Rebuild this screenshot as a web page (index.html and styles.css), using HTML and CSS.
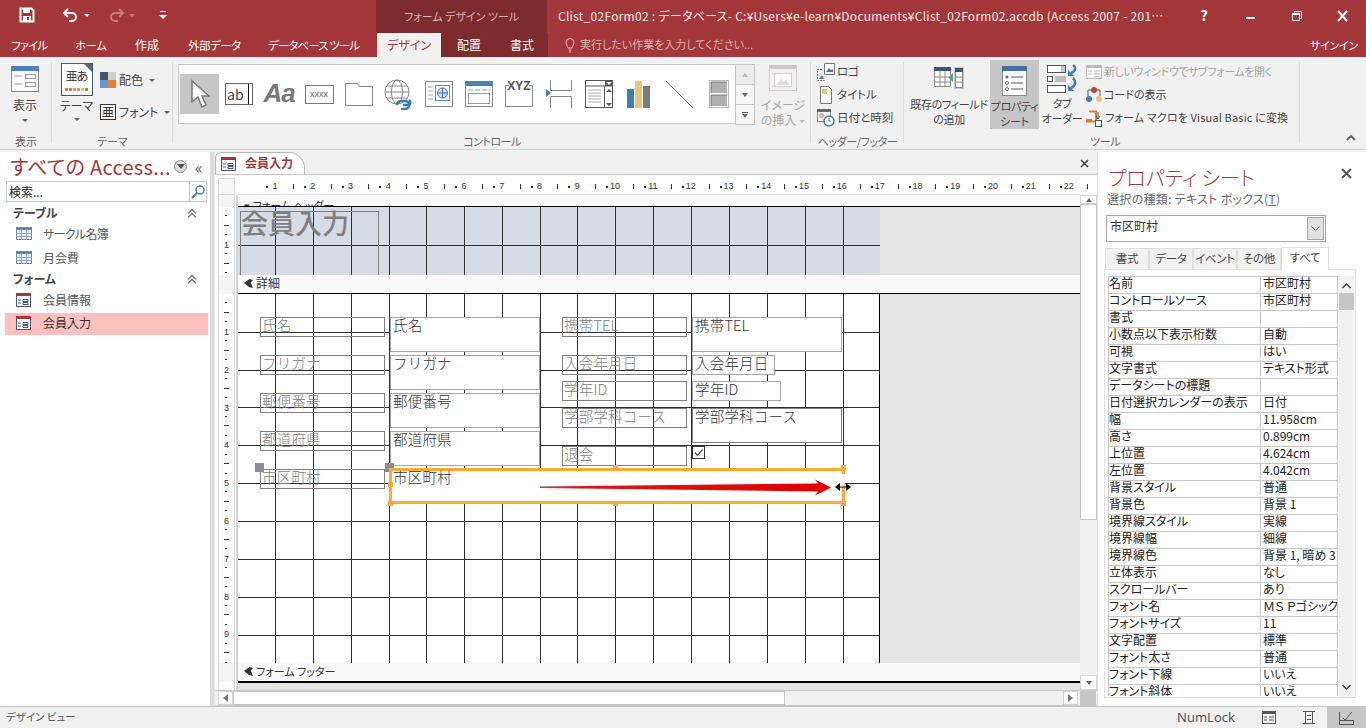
FILE: index.html
```html
<!DOCTYPE html>
<html lang="ja">
<head>
    <meta charset="UTF-8">
    <title>Clist_02Form02</title>
    <link rel="stylesheet" href="styles.css">
</head>
<body>
<div class="titlebar">
    <div class="qat">
        <svg class="qat-save" width="16" height="16" viewBox="0 0 16 16"><path d="M1.500 1.500h11l2 2v11h-13z" fill="none" stroke="#fff" stroke-width="2"/><rect x="4" y="2" width="7" height="4" fill="#fff"/><rect x="4" y="9" width="8" height="5" fill="#fff"/><rect x="8" y="10" width="2" height="3" fill="#a4373a"/></svg>
        <svg class="qat-undo" width="18" height="14" viewBox="0 0 18 14"><path d="M6 1L2 5l4 4M2 5h8a4 4 0 0 1 0 8H7" fill="none" stroke="#fff" stroke-width="2"/></svg>
        <span class="caret caret-w"></span>
        <svg class="qat-redo" width="18" height="14" viewBox="0 0 18 14"><path d="M12 1l4 4-4 4M16 5H8a4 4 0 0 0 0 8h3" fill="none" stroke="#c57c7e" stroke-width="2"/></svg>
        <span class="caret caret-dim"></span>
        <svg class="qat-more" width="8" height="9" viewBox="0 0 8 9"><rect x="1" y="0" width="6" height="1" fill="#fff"/><path d="M0 4h8L4 8z" fill="#fff"/></svg>
    </div>
    <div class="ctx-title">フォーム デザイン ツール</div>
    <div class="doc-title">Clist_02Form02 : データベース- C:¥Users¥e-learn¥Documents¥Clist_02Form02.accdb (Access 2007 - 201…</div>
    <div class="winbtns">
        <span class="help">?</span>
        <svg width="46" height="14" viewBox="0 0 46 14"><rect x="18" y="8" width="9" height="2" fill="#fff"/></svg>
        <svg width="46" height="14" viewBox="0 0 46 14"><path d="M18.500 4.500h7v7h-7zM20.500 4.500v-2h7v7h-2" fill="none" stroke="#fff"/><rect x="18" y="4" width="8" height="2" fill="#fff"/></svg>
        <svg width="46" height="14" viewBox="0 0 46 14"><path d="M18 2l9 10M27 2l-9 10" stroke="#fff" stroke-width="2"/></svg>
    </div>
</div>

<div class="tabbar">
    <span class="tab tab-file">ファイル</span>
    <span class="tab tab-home">ホーム</span>
    <span class="tab tab-create">作成</span>
    <span class="tab tab-ext">外部データ</span>
    <span class="tab tab-db">データベース ツール</span>
    <div class="ctx-tabs">
        <span class="tab-active">デザイン</span>
        <span class="tab tab-arr">配置</span>
        <span class="tab tab-fmt">書式</span>
    </div>
    <div class="tell">
        <svg width="10" height="15" viewBox="0 0 10 15"><path d="M3 10c0-2-2-3-2-5.500a4 4 0 0 1 8 0C9 7 7 8 7 10zM3.500 12h3M4 14h2" fill="none" stroke="#e0c4c5"/></svg>
        <span>実行したい作業を入力してください...</span>
    </div>
    <span class="signin">サインイン</span>
</div>

<div class="ribbon">
    <section class="group g-view">
        <div class="group-body">
            <div class="bigbtn btn-view">
                <svg width="28" height="26" viewBox="0 0 28 26"><rect x=".5" y=".5" width="27" height="25" fill="#fff" stroke="#8a8a8a"/><rect width="28" height="5" fill="#4d82b8"/><path d="M3 10h8M3 18h8" stroke="#999"/><rect x="14.500" y="8.500" width="10" height="4" fill="none" stroke="#999"/><rect x="14.500" y="16.500" width="10" height="4" fill="none" stroke="#999"/></svg>
                <span>表示</span>
                <i class="caret"></i>
            </div>
        </div>
        <div class="group-label">表示</div>
    </section>
    <section class="group g-theme">
        <div class="group-body theme-body">
            <div class="bigbtn btn-theme">
                <div class="theme-icon">
                    <span class="theme-glyph">亜あ</span>
                    <svg width="24" height="4" viewBox="0 0 24 4"><rect x="0" width="3" height="3" fill="#e07b2c"/><rect x="4" width="3" height="3" fill="#e07b2c"/><rect x="8" width="3" height="3" fill="#c9a35f"/><rect x="12" width="3" height="3" fill="#a5a5a5"/><rect x="16" width="3" height="3" fill="#f0c040"/><rect x="20" width="3" height="3" fill="#6aa84f"/></svg>
                </div>
                <span class="theme-label">テーマ</span>
                <i class="caret"></i>
            </div>
            <div class="theme-side">
                <div class="side-row">
                    <svg width="16" height="16" viewBox="0 0 16 16"><rect width="8" height="8" fill="#44546a"/><rect x="8" width="8" height="8" fill="#d0cece"/><rect y="8" width="8" height="8" fill="#5b9bd5"/><rect x="8" y="8" width="8" height="8" fill="#ed7d31"/></svg>
                    <span>配色</span><i class="caret"></i>
                </div>
                <div class="side-row side-font">
                    <span class="font-icon">亜</span>
                    <span>フォント</span><i class="caret"></i>
                </div>
            </div>
        </div>
        <div class="group-label">テーマ</div>
    </section>
    <section class="group g-ctl">
        <div class="group-body ctl-body">
            <div class="gallery">
                <div class="cell cell-on"><svg width="20" height="30" viewBox="0 0 20 30"><path d="M2 2v21l6-5 4 10 4-2-4-9h7z" fill="#fff" stroke="#777" stroke-width="1.500"/></svg></div>
                <div class="cell"><div class="ic-text">ab</div></div>
                <div class="cell"><span class="ic-aa">Aa</span></div>
                <div class="cell"><div class="ic-xxxx">xxxx</div></div>
                <div class="cell"><svg width="28" height="24" viewBox="0 0 28 24"><path d="M.5 23.500V1.500h12l2 3h13v19z" fill="#fff" stroke="#888"/></svg></div>
                <div class="cell"><svg width="32" height="32" viewBox="0 0 32 32"><g fill="none" stroke="#888"><circle cx="14" cy="14" r="12"/><ellipse cx="14" cy="14" rx="5.500" ry="12"/><path d="M2 14h24M4 8h20M4 20h20"/></g><path d="M14 27a4 4 0 0 1 4-4h4a4 4 0 0 1 0 8h-4" fill="none" stroke="#3b7bb5" stroke-width="2.500"/><path d="M20 27h6a3 3 0 0 0 0-5" fill="none" stroke="#3b7bb5" stroke-width="2.500"/></svg></div>
                <div class="cell"><svg width="28" height="26" viewBox="0 0 28 26"><rect x=".5" y=".5" width="27" height="25" fill="#fff" stroke="#888"/><path d="M3 6h5M3 10h5M3 14h5M3 18h5" stroke="#aaa"/><rect x="10.500" y="4.500" width="14" height="15" fill="none" stroke="#5b8fc2"/><circle cx="17.500" cy="12" r="5" fill="#cfe0f0" stroke="#3f7cb5"/><path d="M12.500 12h10M17.500 7v10" stroke="#3f7cb5"/></svg></div>
                <div class="cell"><svg width="28" height="26" viewBox="0 0 28 26"><rect x=".5" y=".5" width="27" height="25" fill="#fff" stroke="#888"/><rect width="28" height="5" fill="#4d82b8"/><path d="M3 9h22" stroke="#999" stroke-dasharray="5 2"/><rect x="3.500" y="12.500" width="21" height="10" fill="none" stroke="#999"/></svg></div>
                <div class="cell cell-xyz"><svg width="28" height="26" viewBox="0 0 28 26"><path d="M4 4.500H.5v21h27v-21H24" fill="#fff" stroke="#888"/></svg><span class="ic-xyz">XYZ</span></div>
                <div class="cell"><svg width="26" height="28" viewBox="0 0 26 28"><path d="M4.500 0v10.500h21V0M4.500 28V16.500h21V28" fill="none" stroke="#888"/><path d="M0 9l5 4-5 4z" fill="#3f7cb5"/></svg></div>
                <div class="cell"><svg width="28" height="28" viewBox="0 0 28 28"><rect x=".5" y=".5" width="27" height="27" fill="#fff" stroke="#555"/><path d="M0 6h28" stroke="#555"/><rect x="20" y="0" width="8" height="6" fill="#555"/><path d="M21 2h6l-3 3z" fill="#fff"/><path d="M19.500 6v22" stroke="#555"/><path d="M21 12h6l-3-3zM21 23h6l-3 3z" fill="#555"/><path d="M3 10h13M3 13h13M3 16h13M3 19h13M3 22h13" stroke="#aaa"/></svg></div>
                <div class="cell"><svg width="24" height="28" viewBox="0 0 24 28"><rect y="9" width="7" height="19" fill="#3f7cb5"/><rect x="8" y="1" width="7" height="27" fill="#e9c47c"/><rect x="16" y="6" width="7" height="22" fill="#7a7a7a"/></svg></div>
                <div class="cell"><svg width="29" height="29" viewBox="0 0 29 29"><path d="M1 1l27 27" stroke="#666"/></svg></div>
                <div class="cell"><svg width="20" height="28" viewBox="0 0 20 28"><rect x=".5" y=".5" width="19" height="27" fill="#fff" stroke="#bbb"/><rect x="2" y="2" width="16" height="11" fill="#b0b0b0"/><path d="M2 13V2h16" fill="none" stroke="#777"/><rect x="2" y="15" width="16" height="11" fill="#b0b0b0"/><path d="M2 26V15h16" fill="none" stroke="#777"/></svg></div>
                <div class="gal-scroll">
                    <span class="gal-btn gal-up"><i class="tri-up"></i></span>
                    <span class="gal-btn"><i class="tri-dn"></i></span>
                    <span class="gal-btn gal-more"><b></b><i class="tri-dn"></i></span>
                </div>
            </div>
            <div class="bigbtn btn-image">
                <svg width="28" height="26" viewBox="0 0 28 26"><rect x=".5" y=".5" width="27" height="25" fill="#f3eff3" stroke="#cfcfcf"/><rect width="28" height="4" fill="#c9c9c9"/><rect x="5.500" y="8.500" width="17" height="13" fill="#fff" stroke="#d8d0d8"/><path d="M7 20l5-6 3 3 2-2 4 5z" fill="#ddd"/></svg>
                <span>イメージ<br>の挿入<i class="caret caret-inl"></i></span>
            </div>
        </div>
        <div class="group-label label-ctl">コントロール</div>
    </section>
    <section class="group g-head">
        <div class="group-body head-body">
            <div class="list-row"><svg width="18" height="18" viewBox="0 0 18 18"><path d="M7.500 .5h10v11h-10z" fill="#fff" stroke="#777"/><path d="M9 9l3-4 2 2 2-1v3z" fill="#3f7cb5"/><path d="M5 6.500H.5v11h7" fill="none" stroke="#777" stroke-dasharray="2 1"/><path d="M2 16l3-4 2 4z" fill="#3f7cb5"/></svg><span>ロゴ</span></div>
            <div class="list-row"><svg width="18" height="18" viewBox="0 0 18 18"><path d="M3.500 .5h8l3 3v14h-11z" fill="#fff" stroke="#777"/><rect x="5" y="3" width="5" height="5" fill="#e9c47c"/></svg><span>タイトル</span></div>
            <div class="list-row"><svg width="18" height="18" viewBox="0 0 18 18"><rect x=".5" y=".5" width="13" height="12" fill="#fff" stroke="#888"/><rect width="14" height="3" fill="#666"/><rect x="3" y="5" width="3" height="3" fill="none" stroke="#e07b2c"/><circle cx="12" cy="12" r="5" fill="#fff" stroke="#3f7cb5" stroke-width="1.500"/><path d="M12 9v3h2" fill="none" stroke="#3f7cb5"/></svg><span>日付と時刻</span></div>
        </div>
        <div class="group-label label-head">ヘッダー/フッター</div>
    </section>
    <section class="group g-tools">
        <div class="group-body tools-body">
            <div class="bigbtn btn-add">
                <svg width="30" height="23" viewBox="0 0 30 23"><rect x="20" y="0" width="10" height="22" fill="#b7cfe3"/><path d="M.5 1.500h16v18H.5z" fill="#fff" stroke="#888"/><rect width="17" height="4" fill="#44546a"/><path d="M.5 10h16M.5 15h16M6 4v16M11 4v16" stroke="#888"/><rect x="21.500" y="1.500" width="7" height="19" fill="#fff" stroke="#888"/><rect x="21" y="1" width="8" height="4" fill="#44546a"/><path d="M21.500 10h7M21.500 15h7" stroke="#888"/><path d="M19 6v9l-5-4.500z" fill="#5ea38f"/></svg>
                <span>既存のフィールド<br>の追加</span>
            </div>
            <div class="bigbtn btn-prop">
                <svg width="25" height="30" viewBox="0 0 25 30"><rect x=".5" y=".5" width="24" height="29" fill="#fff" stroke="#888"/><rect width="25" height="5" fill="#3f6fa5"/><circle cx="5" cy="11" r="1.500" fill="#666"/><circle cx="5" cy="17" r="1.500" fill="none" stroke="#666"/><circle cx="5" cy="23" r="1.500" fill="none" stroke="#666"/><path d="M9 11h12M9 17h12M9 23h12" stroke="#555"/></svg>
                <span>プロパティ<br>シート</span>
            </div>
            <div class="bigbtn btn-order">
                <svg width="31" height="29" viewBox="0 0 31 29"><rect x=".5" y="1.500" width="18" height="7" fill="#fff" stroke="#555"/><rect x="14" y="2" width="4" height="6" fill="#b7cfe3"/><rect x=".5" y="12.500" width="5" height="5" fill="#fff" stroke="#555"/><path d="M8 13h11M8 15h11M8 17h11" stroke="#888"/><rect x=".5" y="21.500" width="18" height="7" fill="#fff" stroke="#555"/><path d="M26 1c3 2 3 6-2 8M26 14c3 3 3 8-2 10" fill="none" stroke="#3f7cb5" stroke-width="2.500"/><path d="M21 6v6h6zM21 21v6h6z" fill="#3f7cb5"/></svg>
                <span>タブ<br>オーダー</span>
            </div>
            <div class="tool-list">
                <div class="list-row row-dim"><svg width="16" height="14" viewBox="0 0 16 14"><rect x=".5" y=".5" width="15" height="13" fill="#fff" stroke="#bbb"/><rect width="16" height="3" fill="#bbb"/><path d="M2 6h4M2 9h4M8 6h6M8 9h6M8 12h6" stroke="#bbb"/></svg><span>新しいウィンドウでサブフォームを開く</span></div>
                <div class="list-row"><svg width="16" height="16" viewBox="0 0 16 16"><path d="M2 9V3h12v6" fill="none" stroke="#555"/><circle cx="8" cy="3" r="3" fill="#c0413b"/><circle cx="3" cy="12" r="3" fill="#3f7cb5"/><circle cx="13" cy="12" r="3" fill="#e9c47c"/></svg><span>コードの表示</span></div>
                <div class="list-row row-macro"><svg width="17" height="17" viewBox="0 0 17 17"><path d="M3 1.500h7v10H0" fill="#fff" stroke="#e07b2c" stroke-width="2"/><rect x="0" y="9" width="6" height="3" fill="#e07b2c"/><path d="M12 2v7M10 6l2 3 2-3" fill="none" stroke="#555"/><rect x="9.500" y="10.500" width="6" height="6" fill="#fff" stroke="#3a5a80"/></svg><span>フォーム マクロを Visual Basic に変換</span></div>
            </div>
        </div>
        <div class="group-label label-tools">ツール</div>
    </section>
    <div class="collapse"><svg width="10" height="7" viewBox="0 0 10 7"><path d="M1 6l4-4 4 4" fill="none" stroke="#666" stroke-width="2"/></svg></div>
</div>

<div class="main">
    <aside class="nav">
        <div class="nav-head">
            <span class="nav-title">すべての Access...</span>
            <span class="nav-drop"><svg width="8" height="5" viewBox="0 0 8 5"><path d="M0 0h8L4 5z" fill="#555"/></svg></span>
            <span class="nav-hide">«</span>
        </div>
        <div class="nav-search">
            <span>検索...</span>
            <span class="search-btn"><svg width="14" height="14" viewBox="0 0 14 14"><circle cx="9" cy="5" r="4" fill="none" stroke="#3f7cb5" stroke-width="1.500"/><path d="M6 8l-5 5" stroke="#3f7cb5" stroke-width="2"/></svg></span>
        </div>
        <div class="nav-sec"><span>テーブル</span><i class="dbl"></i></div>
        <div class="nav-item item-kana"><svg class="ic-table" width="16" height="13" viewBox="0 0 16 13"><rect x=".5" y=".5" width="15" height="12" fill="#eaf0f7" stroke="#6d86a5"/><rect width="16" height="3" fill="#6d86a5"/><path d="M0 6.500h16M0 9.500h16M5.500 3v10M10.500 3v10" stroke="#8ea3bc"/></svg><span>サークル名簿</span></div>
        <div class="nav-item"><svg class="ic-table" width="16" height="13" viewBox="0 0 16 13"><rect x=".5" y=".5" width="15" height="12" fill="#eaf0f7" stroke="#6d86a5"/><rect width="16" height="3" fill="#6d86a5"/><path d="M0 6.500h16M0 9.500h16M5.500 3v10M10.500 3v10" stroke="#8ea3bc"/></svg><span>月会費</span></div>
        <div class="nav-sec sec-form"><span>フォーム</span><i class="dbl"></i></div>
        <div class="nav-item item-form"><svg width="15" height="14" viewBox="0 0 15 14"><rect x=".5" y=".5" width="14" height="13" fill="#fff" stroke="#3f5a7a"/><rect width="15" height="3" fill="#a4373a"/><path d="M2 7h3M2 10h3M7 6.500h5v2H7zM7 9.500h5v2H7z" fill="none" stroke="#3f5a7a"/></svg><span>会員情報</span></div>
        <div class="nav-item item-form item-on"><svg width="15" height="14" viewBox="0 0 15 14"><rect x=".5" y=".5" width="14" height="13" fill="#fff" stroke="#3f5a7a"/><rect width="15" height="3" fill="#a4373a"/><path d="M2 7h3M2 10h3M7 6.500h5v2H7zM7 9.500h5v2H7z" fill="none" stroke="#3f5a7a"/></svg><span>会員入力</span></div>
    </aside>

    <div class="doc">
        <div class="doc-tabs">
            <div class="doc-tab">
                <svg width="15" height="14" viewBox="0 0 15 14"><rect x=".5" y=".5" width="14" height="13" fill="#fff" stroke="#3f5a7a"/><rect width="15" height="3" fill="#a4373a"/><path d="M2 7h3M2 10h3M7 6.500h5v2H7zM7 9.500h5v2H7z" fill="none" stroke="#3f5a7a"/></svg>
                <span>会員入力</span>
            </div>
            <svg class="doc-close" width="9" height="9" viewBox="0 0 9 9"><path d="M1 1l7 7M8 1L1 8" stroke="#444" stroke-width="1.500"/></svg>
        </div>
        <div class="doc-body">
            <div class="doc-work">
                <div class="ruler-row">
                    <div class="ruler-corner"></div>
                    <div class="hruler">
                        <span>1</span><span>2</span><span>3</span><span>4</span><span>5</span><span>6</span><span>7</span><span>8</span><span>9</span><span>10</span><span>11</span><span>12</span><span>13</span><span>14</span><span>15</span><span>16</span><span>17</span><span>18</span><span>19</span><span>20</span><span>21</span><span>22</span>
                    </div>
                </div>
                <div class="design-row">
                    <div class="vruler">
                        <div class="vband"></div>
                        <div class="vsec vsec-head"><span>1</span></div>
                        <div class="vband vband-mid"></div>
                        <div class="vsec vsec-detail">
                            <span>1</span><span>2</span><span>3</span><span>4</span><span>5</span><span>6</span><span>7</span><span>8</span><span>9</span>
                        </div>
                        <div class="vband vband-foot"></div>
                    </div>
                    <div class="design">
                        <div class="band band-top"><span class="band-clip">▾ フォーム ヘッダー</span></div>
                        <div class="sec-head">
                            <svg class="grid" width="642" height="68" viewBox="0 0 642 68"><path d="M37.500 0v68M75.500 0v68M113.500 0v68M151.500 0v68M188.500 0v68M226.500 0v68M264.500 0v68M302.500 0v68M339.500 0v68M377.500 0v68M415.500 0v68M453.500 0v68M491.500 0v68M529.500 0v68M567.500 0v68M605.500 0v68M642 0v68M0 38.500h642" stroke="#2f2f2f" fill="none"/></svg>
                            <div class="title-box">会員入力</div>
                        </div>
                        <div class="band band-detail"><i class="band-mark"></i><span>詳細</span></div>
                        <div class="sec-detail">
                            <svg class="grid" width="642" height="369" viewBox="0 0 642 369"><path d="M37.500 0v369M75.500 0v369M113.500 0v369M151.500 0v369M188.500 0v369M226.500 0v369M264.500 0v369M302.500 0v369M339.500 0v369M377.500 0v369M415.500 0v369M453.500 0v369M491.500 0v369M529.500 0v369M567.500 0v369M605.500 0v369M0 38.500h642M0 76.500h642M0 113.500h642M0 151.500h642M0 189.500h642M0 227.500h642M0 265.500h642M0 303.500h642M0 341.500h642" stroke="#2f2f2f" fill="none"/><path d="M642 0v369" stroke="#000" stroke-width="2"/></svg>

                            <div class="lbl" style="left:22px;top:23px">氏名</div>
                            <div class="lbl" style="left:22px;top:61px">フリガナ</div>
                            <div class="lbl" style="left:22px;top:99px">郵便番号</div>
                            <div class="lbl" style="left:22px;top:137px">都道府県</div>
                            <div class="lbl" style="left:22px;top:175px">市区町村</div>

                            <div class="box box-tall" style="left:152px;top:23px">氏名</div>
                            <div class="box box-tall" style="left:152px;top:61px">フリガナ</div>
                            <div class="box box-tall" style="left:152px;top:99px">郵便番号</div>
                            <div class="box box-tall" style="left:152px;top:137px">都道府県</div>

                            <div class="lbl" style="left:324px;top:23px">携帯TEL</div>
                            <div class="lbl" style="left:324px;top:61px">入会年月日</div>
                            <div class="lbl" style="left:324px;top:87px">学年ID</div>
                            <div class="lbl" style="left:324px;top:114px">学部学科コース</div>
                            <div class="lbl" style="left:324px;top:152px">退会</div>

                            <div class="box box-tall" style="left:454px;top:23px">携帯TEL</div>
                            <div class="box box-date" style="left:454px;top:61px">入会年月日</div>
                            <div class="box box-grade" style="left:454px;top:87px">学年ID</div>
                            <div class="box box-tall box-dark" style="left:454px;top:114px">学部学科コース</div>
                            <svg class="check" width="14" height="14" viewBox="0 0 14 14"><rect x=".5" y=".5" width="12" height="12" fill="#fff" stroke="#333"/><path d="M3 6.500l2.500 3 5-6" fill="none" stroke="#555" stroke-width="1.200"/></svg>

                            <div class="handle-g" style="left:17px;top:169px"></div>
                            <div class="handle-g" style="left:147px;top:169px"></div>
                            <div class="selected">市区町村</div>
                            <i class="handle-o" style="left:150px;top:188px"></i>
                            <i class="handle-o" style="left:375px;top:171px"></i>
                            <i class="handle-o" style="left:603px;top:171px"></i>
                            <i class="handle-o" style="left:150px;top:207px"></i>
                            <i class="handle-o" style="left:375px;top:207px"></i>
                            <i class="handle-o" style="left:603px;top:207px"></i>
                            <i class="sel-gap"></i>

                            <svg class="arrow" width="330" height="20" viewBox="0 0 330 20"><defs><linearGradient id="ag" x1="0" x2="1" y1="0" y2="0"><stop offset="0" stop-color="#b0483f"/><stop offset=".12" stop-color="#d81a1a"/><stop offset="1" stop-color="#e20000"/></linearGradient></defs><path d="M0 8.500L278 5.500l-3-4 16 8-16 8 3-4L0 10z" fill="url(#ag)"/><path d="M299 9h8" stroke="#000"/><path d="M295 9l5-4v8zM311 9l-5-4v8z" fill="#000"/></svg>
                        </div>
                        <div class="band band-foot"><i class="band-mark"></i><span>フォーム フッター</span></div>
                        <div class="foot-rest"></div>
                    </div>
                    <div class="vscroll">
                        <span class="sb-btn"><i class="tri-up"></i></span>
                        <span class="sb-thumb"></span>
                        <span class="sb-track"></span>
                        <span class="sb-btn"><i class="tri-dn"></i></span>
                    </div>
                </div>
            </div>
            <div class="hscroll-row">
                <div class="hscroll">
                    <span class="hs-btn"><i class="tri-l"></i></span>
                    <span class="hs-thumb"></span>
                    <span class="hs-track"></span>
                    <span class="hs-btn"><i class="tri-r"></i></span>
                </div>
                <span class="hs-corner"></span>
            </div>
        </div>
    </div>

    <aside class="props">
        <div class="props-head">
            <span class="props-title">プロパティ シート</span>
            <svg width="11" height="11" viewBox="0 0 11 11"><path d="M1 1l9 9M10 1l-9 9" stroke="#555" stroke-width="2"/></svg>
        </div>
        <div class="props-sub">選択の種類: テキスト ボックス(<u>T</u>)</div>
        <div class="props-combo">
            <span>市区町村</span>
            <span class="combo-btn"><svg width="9" height="5" viewBox="0 0 9 5"><path d="M.5.500l4 4 4-4" fill="none" stroke="#555"/></svg></span>
        </div>
        <div class="props-tabs">
            <span>書式</span><span>データ</span><span>イベント</span><span>その他</span><span class="ptab-on">すべて</span>
        </div>
        <div class="props-body">
            <div class="prop-table">
                <div class="prow"><span>名前</span><span>市区町村</span></div>
                <div class="prow"><span>コントロールソース</span><span>市区町村</span></div>
                <div class="prow"><span>書式</span><span></span></div>
                <div class="prow"><span>小数点以下表示桁数</span><span>自動</span></div>
                <div class="prow"><span>可視</span><span>はい</span></div>
                <div class="prow"><span>文字書式</span><span>テキスト形式</span></div>
                <div class="prow"><span>データシートの標題</span><span></span></div>
                <div class="prow"><span>日付選択カレンダーの表示</span><span>日付</span></div>
                <div class="prow"><span>幅</span><span>11.958cm</span></div>
                <div class="prow"><span>高さ</span><span>0.899cm</span></div>
                <div class="prow"><span>上位置</span><span>4.624cm</span></div>
                <div class="prow"><span>左位置</span><span>4.042cm</span></div>
                <div class="prow"><span>背景スタイル</span><span>普通</span></div>
                <div class="prow"><span>背景色</span><span>背景 1</span></div>
                <div class="prow"><span>境界線スタイル</span><span>実線</span></div>
                <div class="prow"><span>境界線幅</span><span>細線</span></div>
                <div class="prow"><span>境界線色</span><span>背景 1, 暗め 3</span></div>
                <div class="prow"><span>立体表示</span><span>なし</span></div>
                <div class="prow"><span>スクロールバー</span><span>あり</span></div>
                <div class="prow"><span>フォント名</span><span>ＭＳ Ｐゴシック</span></div>
                <div class="prow"><span>フォントサイズ</span><span>11</span></div>
                <div class="prow"><span>文字配置</span><span>標準</span></div>
                <div class="prow"><span>フォント太さ</span><span>普通</span></div>
                <div class="prow"><span>フォント下線</span><span>いいえ</span></div>
                <div class="prow"><span>フォント斜体</span><span>いいえ</span></div>
            </div>
            <div class="prop-scroll">
                <svg width="9" height="6" viewBox="0 0 9 6"><path d="M.5 5l4-4 4 4" fill="none" stroke="#444" stroke-width="1.500"/></svg>
                <span class="ps-thumb"></span>
                <span class="ps-track"></span>
                <svg width="9" height="6" viewBox="0 0 9 6"><path d="M.5 1l4 4 4-4" fill="none" stroke="#444" stroke-width="1.500"/></svg>
            </div>
        </div>
    </aside>
</div>

<div class="status">
    <span class="st-text">デザイン ビュー</span>
    <span class="st-num">NumLock</span>
    <span class="st-btn"><svg width="14" height="13" viewBox="0 0 14 13"><rect x=".5" y=".5" width="13" height="12" fill="none" stroke="#555"/><rect width="14" height="3" fill="#555"/><path d="M2 6h3M2 9h3M7 6h5M7 9h5" stroke="#555"/></svg></span>
    <span class="st-btn st-btn2"><svg width="12" height="13" viewBox="0 0 12 13"><path d="M0 .5h12M0 12.500h12M2.500 1v11M9.500 1v11M4 4.500h4M4 8.500h4" stroke="#555" fill="none"/></svg></span>
    <span class="st-btn st-on"><svg width="15" height="14" viewBox="0 0 15 14"><path d="M.5 1v12.500h14V9M.5 9.500h14" fill="none" stroke="#555"/><path d="M4 7l2 2 7-8" fill="none" stroke="#555"/></svg></span>
</div>
</body>
</html>
```

FILE: styles.css
```css
* {
    margin: 0;
    padding: 0;
    box-sizing: border-box;
}
html, body {
    width: 1366px;
    height: 728px;
    overflow: hidden;
}
body {
    background-color: #f1f1f1;
    color: #444;
    font-family: "Noto Sans CJK JP", "Noto Sans", sans-serif;
    font-size: 12px;
    font-feature-settings: "palt";
    line-height: 1.2;
}
i {
    display: block;
}

/* title bar */
.titlebar {
    height: 33px;
    background-color: #a4373a;
    display: flex;
    color: #fff;
}
.qat {
    width: 377px;
    display: flex;
    align-items: center;
    padding-left: 19px;
    padding-bottom: 3px;
}
.qat-undo { margin-left: 27px; }
.caret-w { margin-left: 4px; border-top-color: #fff !important; }
.qat-redo { margin-left: 17px; }
.caret-dim { margin-left: 4px; border-top-color: #c57c7e !important; }
.qat-more { margin-left: 24px; }
.caret {
    display: inline-block;
    width: 0;
    height: 0;
    border-left: 3px solid transparent;
    border-right: 3px solid transparent;
    border-top: 3px solid #666;
}
.ctx-title {
    width: 171px;
    background-color: #7e2b2d;
    color: #d3b3b4;
    text-align: center;
    padding-top: 10px;
    font-size: 11px;
}
.doc-title {
    width: 643px;
    padding-left: 11px;
    padding-top: 9px;
    white-space: nowrap;
    font-size: 12px;
    letter-spacing: .27px;
    color: #f6e9e9;
    flex: none;
}
.winbtns {
    flex: none;
    display: flex;
    align-items: center;
    padding-bottom: 2px;
}
.winbtns svg { flex: none; }
.help {
    width: 28px;
    margin-right: 10px;
    font-weight: 700;
    font-size: 14px;
    text-align: center;
}

/* tabs */
.tabbar {
    height: 24px;
    background-color: #a4373a;
    display: flex;
    color: #fff;
    position: relative;
}
.tab {
    line-height: 24px;
    white-space: nowrap;
}
.tab-file { margin-left: 11px; width: 64px; font-size: 11.500px; letter-spacing: -.9px; }
.tab-home { width: 60px; font-size: 11.500px; letter-spacing: -.5px; }
.tab-create { width: 53px; }
.tab-ext { width: 80px; font-size: 11.500px; letter-spacing: -.5px; }
.tab-db { width: 109px; font-size: 11.500px; letter-spacing: -.9px; }
.ctx-tabs {
    width: 171px;
    background-color: #7e2b2d;
    display: flex;
}
.tab-active {
    width: 64px;
    background-color: #f1f1f1;
    color: #a4373a;
    line-height: 24px;
    text-align: center;
}
.tab-arr { margin-left: 16px; width: 53px; }
.tell {
    width: 762px;
    display: flex;
    align-items: center;
    gap: 5px;
    padding-left: 17px;
    color: #d7b5b6;
    font-size: 11px;
}
.signin {
    line-height: 24px;
    font-size: 11px;
    letter-spacing: -.3px;
}

/* ribbon */
.ribbon {
    height: 95px;
    display: flex;
    position: relative;
    color: #444;
    box-shadow: inset 0 -2px 0 #f1f1f1, inset 0 -3px 0 #d4d4d4;
}
.group {
    display: flex;
    flex-direction: column;
    padding-top: 5px;
    position: relative;
    height: 91px;
}
.group::after {
    content: "";
    position: absolute;
    right: 0;
    top: 5px;
    bottom: 5px;
    width: 1px;
    background-color: #dcdcdc;
}
.group-body {
    height: 72px;
    display: flex;
}
.group-label {
    height: 14px;
    text-align: center;
    font-size: 11px;
    line-height: 14px;
    color: #666;
}
.label-ctl { letter-spacing: -.5px; }
.label-head { letter-spacing: -.4px; }
.label-tools { text-align: left; padding-left: 186px; letter-spacing: -.3px; }
.g-view { width: 52px; }
.g-theme { width: 121px; }
.g-ctl { width: 638px; }
.g-head { width: 93px; }
.g-tools { width: 396px; }
.bigbtn {
    display: flex;
    flex-direction: column;
    align-items: center;
    text-align: center;
    line-height: 15px;
    font-size: 12px;
}
.btn-view {
    width: 50px;
    padding-top: 4px;
    gap: 5px;
}
.btn-view .caret { margin-top: 2px; }
.theme-body { padding-left: 8px; }
.btn-theme {
    width: 33px;
}
.theme-icon {
    width: 32px;
    height: 33px;
    border: 1px solid #3e5a7e;
    background-color: #fff;
    display: flex;
    flex-direction: column;
    align-items: center;
    margin-top: 1px;
    position: relative;
}
.theme-icon::after {
    content: "";
    position: absolute;
    right: 0;
    top: 0;
    border: 4px solid transparent;
    border-top-color: #666;
    border-right-color: #666;
}
.theme-glyph {
    font-size: 12px;
    line-height: 24px;
    letter-spacing: -1px;
    color: #333;
}
.theme-label { margin-top: 2px; white-space: nowrap; }
.btn-theme .caret { margin-top: 5px; }
.theme-side {
    padding-left: 7px;
    padding-top: 9px;
    display: flex;
    flex-direction: column;
    gap: 14px;
}
.side-row {
    display: flex;
    align-items: center;
    gap: 3px;
    height: 18px;
    white-space: nowrap;
}
.side-row .caret { margin-left: 3px; }
.font-icon {
    width: 16px;
    height: 16px;
    border: 1px solid #333;
    background-color: #fff;
    font-size: 12px;
    line-height: 14px;
    text-align: center;
    color: #111;
}
.ctl-body { padding-left: 5px; }
.gallery {
    width: 577px;
    height: 60px;
    margin-top: 2px;
    background-color: #fff;
    border: 1px solid #c6c6c6;
    display: flex;
    align-items: center;
    padding-left: 1px;
    position: relative;
}
.cell {
    width: 40px;
    height: 40px;
    display: flex;
    align-items: center;
    justify-content: center;
    position: relative;
}
.cell-on { background-color: #c6c6c6; width: 39px; }
.ic-text {
    width: 28px;
    height: 22px;
    border: 1px solid #666;
    font-size: 14px;
    line-height: 20px;
    padding-left: 1px;
    color: #444;
    box-shadow: inset -3px 0 0 #fff, inset -4px 0 0 #111;
}
.ic-aa {
    font-family: "Liberation Sans", sans-serif;
    font-style: italic;
    font-weight: 700;
    font-size: 26px;
    color: #777;
    letter-spacing: -1px;
}
.ic-xxxx {
    width: 29px;
    height: 19px;
    border: 1px solid #777;
    font-family: "Liberation Sans", sans-serif;
    font-size: 9px;
    line-height: 17px;
    text-align: center;
    color: #666;
}
.ic-xyz {
    position: absolute;
    top: 5px;
    left: 0;
    right: 0;
    text-align: center;
    font-family: "Liberation Sans", sans-serif;
    font-weight: 700;
    font-size: 12px;
    color: #555;
}
.gal-scroll {
    position: absolute;
    left: 556px;
    top: -1px;
    width: 20px;
    height: 60px;
    display: flex;
    flex-direction: column;
}
.gal-btn {
    flex: 1;
    background-color: #f7f7f7;
    border: 1px solid #c6c6c6;
    margin-bottom: -1px;
    display: flex;
    flex-direction: column;
    align-items: center;
    justify-content: center;
    gap: 1px;
}
.gal-up { background-color: #ececec; }
.gal-more b {
    width: 6px;
    height: 1px;
    background-color: #555;
}
.tri-up, .tri-dn, .tri-l, .tri-r {
    width: 0;
    height: 0;
}
.tri-up { border: 3px solid transparent; border-top: 0; border-bottom: 4px solid #666; }
.tri-dn { border: 3px solid transparent; border-bottom: 0; border-top: 4px solid #666; }
.tri-l { border: 4px solid transparent; border-left: 0; border-right: 5px solid #777; }
.tri-r { border: 4px solid transparent; border-right: 0; border-left: 5px solid #777; }
.gal-up .tri-up { border-bottom-color: #bbb; }
.btn-image {
    width: 50px;
    margin-left: 3px;
    padding-top: 3px;
    color: #a6a6a6;
    gap: 6px;
    white-space: nowrap;
}
.caret-inl {
    display: inline-block;
    margin-left: 3px;
    vertical-align: middle;
    border-top-color: #bbb;
}
.head-body {
    flex-direction: column;
    padding-left: 6px;
    gap: 3px;
}
.list-row {
    height: 20px;
    display: flex;
    align-items: center;
    gap: 2px;
    white-space: nowrap;
    font-size: 11.500px;
}
.tools-body { padding-left: 5px; }
.btn-add {
    width: 80px;
    padding-top: 5px;
    gap: 7px;
    white-space: nowrap;
    font-size: 11px;
    letter-spacing: -.3px;
}
.btn-prop {
    width: 49px;
    height: 69px;
    margin-top: -2px;
    margin-left: 1px;
    background-color: #c6c6c6;
    padding-top: 6px;
    gap: 3px;
    white-space: nowrap;
    font-size: 11px;
    letter-spacing: -.3px;
}
.btn-order {
    width: 46px;
    padding-top: 2px;
    gap: 3px;
    white-space: nowrap;
    font-size: 11px;
    letter-spacing: -.3px;
}
.tool-list {
    margin-left: 1px;
    display: flex;
    flex-direction: column;
    gap: 3px;
}
.tool-list .list-row { font-size: 11px; }
.row-dim { color: #a6a6a6; letter-spacing: -.4px; }
.row-macro { letter-spacing: .15px; }
.collapse {
    position: absolute;
    right: 10px;
    bottom: 9px;
}

/* main area */
.main {
    height: 554px;
    display: flex;
    background-color: #fff;
}
.nav {
    width: 214px;
    background-color: #fff;
    border-right: 4px solid #dcdcdc;
    padding-left: 5px;
}
.nav-head {
    height: 29px;
    display: flex;
    align-items: center;
    padding-left: 5px;
}
.nav-title {
    font-size: 20px;
    color: #a4373a;
    width: 164px;
    white-space: nowrap;
    line-height: 30px;
    letter-spacing: .3px;
}
.nav-drop {
    width: 13px;
    height: 13px;
    border-radius: 50%;
    background-color: #ddd;
    border: 1px solid #888;
    display: flex;
    align-items: center;
    justify-content: center;
}
.nav-hide {
    margin-left: 8px;
    font-size: 16px;
    color: #555;
    line-height: 14px;
}
.nav-search {
    width: 201px;
    height: 21px;
    margin-left: 1px;
    border: 1px solid #c6c6c6;
    display: flex;
    justify-content: space-between;
    color: #222;
    line-height: 19px;
    padding-left: 2px;
}
.search-btn {
    width: 17px;
    border-left: 1px solid #c6c6c6;
    display: flex;
    align-items: center;
    justify-content: center;
}
.nav-sec {
    height: 20px;
    margin-top: 1px;
    width: 203px;
    display: flex;
    justify-content: space-between;
    align-items: center;
    padding-left: 8px;
    padding-right: 12px;
    font-weight: 700;
    color: #444;
}
.sec-form { margin-top: -2px; }
.dbl {
    width: 8px;
    height: 8px;
    position: relative;
}
.dbl::before, .dbl::after {
    content: "";
    position: absolute;
    left: 1px;
    width: 5px;
    height: 5px;
    border-left: 1.500px solid #555;
    border-top: 1.500px solid #555;
    transform: rotate(45deg);
}
.dbl::before { top: 1px; }
.dbl::after { top: 5px; }
.nav-item {
    width: 203px;
    height: 24px;
    display: flex;
    align-items: center;
    padding-left: 11px;
    color: #555;
    font-size: 12px;
}
.nav-item svg {
    margin-right: 11px;
    margin-bottom: 3px;
}
.nav-item span { margin-bottom: 1px; }
.item-kana { letter-spacing: -.6px; }
.item-form { height: 24px; }
.item-form svg { margin-right: 12px; }
.item-on {
    background-color: #ffc0c0;
    color: #333;
    height: 22px;
}

/* document */
.doc {
    width: 883px;
    background-color: #f1f1f1;
    border-left: 1px solid #e8e8e8;
}
.doc-tabs {
    height: 22px;
    display: flex;
    justify-content: space-between;
    align-items: center;
    padding-right: 8px;
}
.doc-tab {
    width: 90px;
    height: 22px;
    background-color: #fff;
    border: 1px solid #b9b9b9;
    border-bottom: 0;
    border-radius: 6px 16px 0 0;
    display: flex;
    align-items: center;
    gap: 9px;
    padding-left: 5px;
    color: #a4373a;
    font-weight: 700;
    font-size: 12px;
}
.doc-body {
    height: 532px;
    background-color: #fff;
    border-top: 1px solid #c6c6c6;
}
.doc-work {
    height: 515px;
    display: flex;
    flex-direction: column;
    padding-top: 3px;
}
.ruler-row {
    height: 17px;
    display: flex;
    padding-left: 3px;
    flex: none;
}
.ruler-corner {
    width: 17px;
    height: 17px;
    border: 1px solid #d8d8d8;
    background-color: #f7f7f7;
}
.hruler {
    margin-left: 3px;
    width: 842px;
    height: 17px;
    display: flex;
    border-bottom: 1px solid #e4e4e4;
    font-family: "Liberation Sans", sans-serif;
    font-size: 9px;
    line-height: 16px;
    color: #333;
    padding-left: 18px;
}
.hruler span {
    width: 37.800px;
    text-align: center;
    flex: none;
    background-image:
        radial-gradient(circle at center, #333 0.8px, transparent 1px),
        linear-gradient(#333, #333),
        radial-gradient(circle at center, #333 0.8px, transparent 1px);
    background-repeat: no-repeat;
    background-size: 2px 2px, 1px 5px, 2px 2px;
    background-position: -24% 8px, 100% 6px, 28% 8px;
}
.design-row {
    height: 495px;
    display: flex;
    padding-left: 3px;
}
.vruler {
    width: 17px;
    height: 495px;
    display: flex;
    flex-direction: column;
    border-left: 1px solid #d8d8d8;
    border-right: 1px solid #d8d8d8;
    font-family: "Liberation Sans", sans-serif;
    font-size: 9px;
    color: #333;
    text-align: center;
}
.vband {
    height: 12px;
    background-color: #f4f4f4;
    flex: none;
}
.vband-mid { height: 19px; }
.vband-foot { height: 19px; }
.vsec {
    background-image:
        repeating-linear-gradient(#fff 0, #fff 8.450px, #333 8.450px, #333 9.450px),
        repeating-linear-gradient(#fff 0, #fff 17.900px, #333 17.900px, #333 18.900px);
    background-size: 2px 100%, 5px 100%;
    background-position: 6px 0, 5px 0;
    background-repeat: no-repeat;
    flex: none;
}
.vsec-head {
    height: 68px;
    padding-top: 32px;
}
.vsec-detail {
    height: 369px;
    padding-top: 32px;
    display: flex;
    flex-direction: column;
}
.vsec-detail span {
    height: 37.800px;
    line-height: 12px;
    flex: none;
    background: linear-gradient(#fff, #fff) no-repeat 0 0 / 100% 12px;
}
.vsec-head span {
    display: block;
    background-color: #fff;
    line-height: 12px;
}
.design {
    width: 842px;
    margin-left: 3px;
    height: 495px;
    background-color: #e4e4e4;
    display: flex;
    flex-direction: column;
    overflow: hidden;
    box-shadow: -2px 0 0 #d4d4d4;
}
.band {
    height: 19px;
    background-color: #fafafa;
    display: flex;
    align-items: center;
    gap: 3px;
    padding-left: 6px;
    padding-bottom: 1px;
    border-bottom: 1px solid #000;
    font-size: 12px;
    color: #333;
    flex: none;
}
.band-top {
    height: 12px;
    align-items: flex-end;
    overflow: hidden;
    font-size: 11px;
    padding-bottom: 0;
}
.band-clip {
    line-height: 12px;
    margin-bottom: -5px;
}
.band-mark {
    width: 9px;
    height: 9px;
    background-color: #333;
    clip-path: polygon(0 45%, 60% 0, 100% 10%, 75% 40%, 100% 100%, 55% 90%);
}
.band-foot {
    height: 20px;
    border-bottom: 2px solid #000;
    font-size: 11px;
}
.sec-head {
    height: 68px;
    position: relative;
    flex: none;
    background: linear-gradient(#d6dce5, #d6dce5) no-repeat 0 0 / 642px 100%;
}
.grid {
    position: absolute;
    left: 0;
    top: 0;
    shape-rendering: crispEdges;
}
.title-box {
    position: absolute;
    left: 2px;
    top: 4px;
    width: 139px;
    height: 64px;
    border: 1px solid #7f7f7f;
    border-bottom: 0;
    font-size: 27px;
    line-height: 22px;
    font-weight: 500;
    color: #7f7f7f;
    font-feature-settings: normal;
}
.sec-detail {
    height: 369px;
    position: relative;
    flex: none;
    background: linear-gradient(#fff, #fff) no-repeat 0 0 / 642px 100%;
}
.lbl {
    position: absolute;
    width: 125px;
    height: 20px;
    border: 1px solid #808080;
    color: #808080;
    font-size: 14.500px;
    letter-spacing: .2px;
    line-height: 9px;
    font-weight: 300;
    padding-left: 1px;
    padding-top: 2px;
    white-space: nowrap;
    font-feature-settings: normal;
}
.box {
    position: absolute;
    border: 1px solid #a6a6a6;
    background-color: #fff;
    color: #333;
    font-size: 14.500px;
    letter-spacing: .2px;
    line-height: 11px;
    font-weight: 300;
    padding-left: 2px;
    padding-top: 1px;
    white-space: nowrap;
    font-feature-settings: normal;
}
.box-tall {
    width: 150px;
    height: 35px;
}
.box-date {
    width: 83px;
    height: 20px;
}
.box-grade {
    width: 89px;
    height: 20px;
}
.box-dark { border-color: #808080; }
.check {
    position: absolute;
    left: 454px;
    top: 152px;
}
.selected {
    position: absolute;
    left: 151px;
    top: 174px;
    width: 456px;
    height: 36px;
    border: 3px solid #ffa939;
    background-color: #fff;
    color: #333;
    font-size: 14.500px;
    letter-spacing: .2px;
    font-weight: 300;
    line-height: 9px;
    padding-left: 1px;
    padding-top: 1px;
    font-feature-settings: normal;
}
.handle-g {
    position: absolute;
    width: 9px;
    height: 9px;
    background-color: #8a8d95;
}
.handle-o {
    position: absolute;
    width: 5px;
    height: 5px;
    background-color: #ffa939;
}
.sel-gap {
    position: absolute;
    left: 604px;
    top: 180px;
    width: 3px;
    height: 13px;
    background-color: #fff;
}
.arrow {
    position: absolute;
    left: 302px;
    top: 184px;
}
.foot-rest {
    flex: 1;
}
.vscroll {
    width: 17px;
    height: 495px;
    display: flex;
    flex-direction: column;
    background-color: #f1f1f1;
}
.sb-btn {
    height: 9px;
    flex: none;
    display: flex;
    align-items: center;
    justify-content: center;
    background-color: #fff;
    border: 1px solid #d4d4d4;
}
.vscroll .sb-btn:last-child { height: 15px; }
.sb-thumb {
    height: 316px;
    flex: none;
    background-color: #fff;
    border: 1px solid #c6c6c6;
}
.sb-track {
    flex: 1;
    background-color: #f1f1f1;
}
.hscroll-row {
    height: 16px;
    display: flex;
    border-top: 1px solid #c6c6c6;
    border-bottom: 1px solid #c6c6c6;
    padding-left: 3px;
    background-color: #f1f1f1;
}
.hscroll {
    width: 860px;
    margin-right: 2px;
    display: flex;
}
.hs-btn {
    width: 15px;
    flex: none;
    display: flex;
    align-items: center;
    justify-content: center;
    background-color: #fff;
    border: 1px solid #d4d4d4;
}
.hs-thumb {
    width: 552px;
    background-color: #fff;
    border: 1px solid #c6c6c6;
}
.hs-track {
    flex: 1;
}
.hs-corner {
    width: 16px;
    background-color: #c6c6c6;
}

/* property sheet */
.props {
    width: 269px;
    background-color: #fff;
    padding-left: 7px;
    border-left: 1px solid #e4e4e4;
}
.props-head {
    height: 38px;
    padding-top: 5px;
    padding-left: 3px;
    padding-right: 14px;
    display: flex;
    justify-content: space-between;
    align-items: center;
}
.props-title {
    font-size: 20px;
    color: #a4373a;
    line-height: 26px;
    font-weight: 300;
    margin-top: 8px;
}
.props-sub {
    height: 20px;
    padding-left: 2px;
    padding-top: 1px;
    line-height: 15px;
    color: #666;
    font-size: 12px;
    letter-spacing: .3px;
}
.props-combo {
    width: 220px;
    height: 27px;
    margin-left: 1px;
    margin-top: 5px;
    border: 1px solid #a6a6a6;
    padding-left: 3px;
    display: flex;
    justify-content: space-between;
    align-items: flex-start;
    color: #333;
    line-height: 20px;
}
.combo-btn {
    width: 17px;
    height: 23px;
    margin: 1px;
    background-color: #e1e1e1;
    border: 1px solid #a6a6a6;
    display: flex;
    align-items: center;
    justify-content: center;
}
.props-tabs {
    height: 22px;
    margin-top: 5px;
    display: flex;
    align-items: flex-end;
    font-size: 11.500px;
    color: #444;
    letter-spacing: -.3px;
}
.props-tabs span {
    width: 44px;
    height: 21px;
    background-color: #f1f1f1;
    border: 1px solid #e0e0e0;
    border-bottom: 0;
    text-align: center;
    line-height: 18px;
}
.props-tabs .ptab-on {
    width: 48px;
    height: 23px;
    background-color: #fff;
    margin-bottom: -1px;
    position: relative;
}
.props-body {
    width: 252px;
    height: 429px;
    margin-left: -1px;
    border: 1px solid #e0e0e0;
    padding: 6px 2px 0 3px;
    display: flex;
    overflow: hidden;
}
.prop-table {
    width: 230px;
    height: 420px;
    border-left: 1px solid #c6c6c6;
    overflow: hidden;
    flex: none;
}
.prow {
    height: 17px;
    display: flex;
    font-size: 12px;
    line-height: 16px;
    color: #222;
    white-space: nowrap;
    border-top: 1px solid #c6c6c6;
}
.prow span {
    overflow: hidden;
    position: relative;
    top: -2px;
}
.prow span:first-child {
    width: 152px;
    border-right: 1px solid #c6c6c6;
    flex: none;
}
.prow span:last-child {
    width: 77px;
    padding-left: 2px;
    border-right: 1px solid #c6c6c6;
    flex: none;
}
.prop-scroll {
    width: 15px;
    height: 421px;
    margin-left: 1px;
    background-color: #f1f1f1;
    display: flex;
    flex-direction: column;
    align-items: center;
    padding-top: 7px;
    padding-bottom: 7px;
}
.ps-thumb {
    width: 15px;
    height: 17px;
    margin-top: 4px;
    background-color: #c6c6c6;
}
.ps-track {
    flex: 1;
}

/* status bar */
.status {
    height: 22px;
    background-color: #f1f1f1;
    border-top: 1px solid #c6c6c6;
    display: flex;
    align-items: center;
    font-size: 10.500px;
    color: #555;
}
.st-text {
    width: 1177px;
    padding-left: 6px;
    flex: none;
}
.st-num {
    width: 71px;
    font-size: 13px;
    font-family: "Noto Sans", sans-serif;
    flex: none;
}
.st-btn {
    width: 42px;
    height: 21px;
    display: flex;
    align-items: center;
    justify-content: center;
    flex: none;
}
.st-btn2 { width: 37px; }
.st-on {
    width: 39px;
    background-color: #c6c6c6;
}
```
